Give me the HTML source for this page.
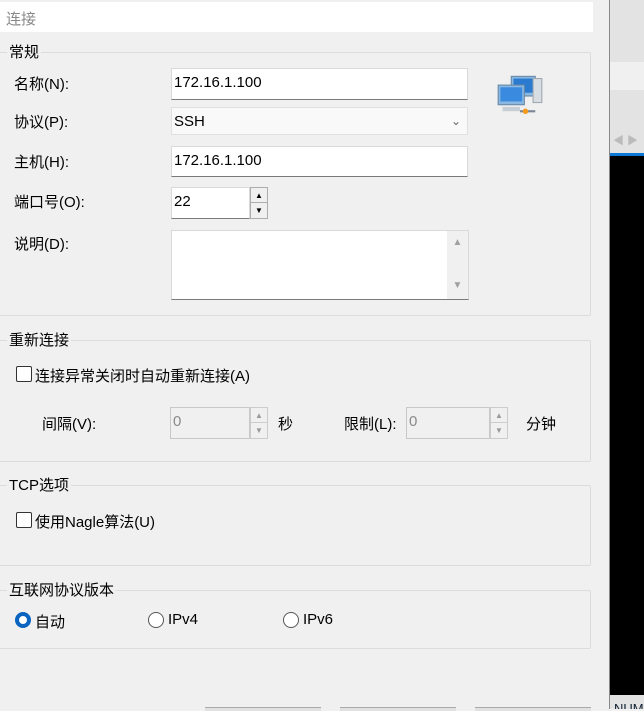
<!DOCTYPE html>
<html><head><meta charset="utf-8"><style>
*{box-sizing:border-box;margin:0;padding:0}
body{width:644px;height:709px;overflow:hidden;background:#f0f0f0;position:relative;font-family:"Liberation Sans","Noto Sans CJK SC",sans-serif;font-size:15px;color:#000}
.a{position:absolute}
.grp{position:absolute;left:-5px;width:596px;border:1px solid #dcdcdc;border-radius:2px}
.gl{position:absolute;background:#f0f0f0;padding:0 2px;left:7px;font-size:15px;line-height:16px}
.in{position:absolute;background:#fff;border:1px solid #d9d9d9;border-bottom:1px solid #7a7a7a;padding-left:2px;font-size:15px}
.dis{background:#f0f0f0;border:1px solid #c8c8c8;color:#8a8a8a}
.spin{position:absolute;width:18px;border:1px solid #adadad;background:#f0f0f0}
.cb{position:absolute;width:16px;height:16px;border:1px solid #333;border-radius:2px;background:#fff}
.rb{position:absolute;width:16px;height:16px;border:1px solid #555;border-radius:50%;background:#fff}
</style></head><body>
<div class="a" style="left:0;top:2px;width:593px;height:30px;background:#fff"></div>
<div class="a" style="left:6px;top:8px;color:#888;font-size:15px">连接</div>

<div class="grp" style="top:52px;height:264px"></div>
<div class="gl" style="top:45px">常规</div>
<div class="a" style="left:14px;top:73px">名称(N):</div>
<div class="in" style="left:171px;top:68px;width:297px;height:32px;line-height:28px">172.16.1.100</div>
<div class="a" style="left:14px;top:111px">协议(P):</div>
<div class="in" style="left:171px;top:107px;width:297px;height:28px;background:#f9f9f9;border-color:#e0e0e0;line-height:28px">SSH<span class="a" style="right:6px;top:-1px;color:#666;font-size:12px">&#8964;</span></div>
<div class="a" style="left:14px;top:151px">主机(H):</div>
<div class="in" style="left:171px;top:146px;width:297px;height:31px;line-height:27px">172.16.1.100</div>
<div class="a" style="left:14px;top:191px">端口号(O):</div>
<div class="in" style="left:171px;top:187px;width:79px;height:32px;line-height:28px">22</div>
<div class="spin" style="left:250px;top:187px;height:32px"><div style="height:15px;border-bottom:1px solid #adadad;text-align:center;font-size:8px;line-height:15px">▲</div><div style="text-align:center;font-size:8px;line-height:15px">▼</div></div>
<div class="a" style="left:14px;top:233px">说明(D):</div>
<div class="in" style="left:171px;top:230px;width:298px;height:70px"></div>
<div class="a" style="left:447px;top:231px;width:21px;height:68px;background:#f0f0f0;color:#a0a0a0;font-size:10px;text-align:center"><div style="margin-top:6px">▲</div><div style="margin-top:32px">▼</div></div>
<svg class="a" style="left:496px;top:72px" width="48" height="48" viewBox="0 0 44 44">
<rect x="14" y="4" width="22" height="18" fill="#8ab8e0" stroke="#6a8aa8"/><rect x="16" y="6" width="18" height="13" fill="#2a7ad0"/>
<rect x="34" y="6" width="8" height="22" fill="#d8dde3" stroke="#a0a8b0"/>
<rect x="2" y="12" width="24" height="18" fill="#8ab8e0" stroke="#6a8aa8"/><rect x="4" y="14" width="20" height="13" fill="#3a8ae0"/>
<path d="M6 32h16v4h-16z" fill="#c8ced6"/><path d="M22 36h14" stroke="#7a8896" stroke-width="2"/><circle cx="27" cy="36" r="2.5" fill="#f39a1e"/>
</svg>

<div class="grp" style="top:340px;height:122px"></div>
<div class="gl" style="top:333px">重新连接</div>
<div class="cb" style="left:16px;top:366px"></div>
<div class="a" style="left:35px;top:365px">连接异常关闭时自动重新连接(A)</div>
<div class="a" style="left:42px;top:413px">间隔(V):</div>
<div class="in dis" style="left:170px;top:407px;width:80px;height:32px;line-height:28px">0</div>
<div class="spin" style="left:250px;top:407px;height:32px;border-color:#ccc;color:#999"><div style="height:15px;border-bottom:1px solid #ccc;text-align:center;font-size:8px;line-height:15px">▲</div><div style="text-align:center;font-size:8px;line-height:15px">▼</div></div>
<div class="a" style="left:278px;top:413px">秒</div>
<div class="a" style="left:344px;top:413px">限制(L):</div>
<div class="in dis" style="left:406px;top:407px;width:84px;height:32px;line-height:28px">0</div>
<div class="spin" style="left:490px;top:407px;height:32px;border-color:#ccc;color:#999"><div style="height:15px;border-bottom:1px solid #ccc;text-align:center;font-size:8px;line-height:15px">▲</div><div style="text-align:center;font-size:8px;line-height:15px">▼</div></div>
<div class="a" style="left:526px;top:413px">分钟</div>

<div class="grp" style="top:485px;height:81px"></div>
<div class="gl" style="top:478px">TCP选项</div>
<div class="cb" style="left:16px;top:512px"></div>
<div class="a" style="left:35px;top:511px">使用Nagle算法(U)</div>

<div class="grp" style="top:590px;height:59px"></div>
<div class="gl" style="top:583px">互联网协议版本</div>
<div class="rb" style="left:15px;top:612px;border:4px solid #0a64c0"></div>
<div class="a" style="left:35px;top:611px">自动</div>
<div class="rb" style="left:148px;top:612px"></div>
<div class="a" style="left:168px;top:611px">IPv4</div>
<div class="rb" style="left:283px;top:612px"></div>
<div class="a" style="left:303px;top:611px">IPv6</div>

<div class="a" style="left:205px;top:707px;width:116px;height:4px;border-top:1px solid #aaa;background:#e1e1e1"></div>
<div class="a" style="left:340px;top:707px;width:116px;height:4px;border-top:1px solid #aaa;background:#e1e1e1"></div>
<div class="a" style="left:475px;top:707px;width:116px;height:4px;border-top:1px solid #aaa;background:#e1e1e1"></div>

<div class="a" style="left:609px;top:0;width:1px;height:709px;background:#888"></div>
<div class="a" style="left:610px;top:0;width:34px;height:62px;background:#e3e3e3"></div>
<div class="a" style="left:610px;top:62px;width:34px;height:28px;background:#f0f0f0"></div>
<div class="a" style="left:610px;top:90px;width:34px;height:63px;background:#e3e3e3"></div>
<div class="a" style="left:613px;top:132px;color:#bbb;font-size:11px">◀ ▶</div>
<div class="a" style="left:610px;top:153px;width:34px;height:3px;background:#0a78d4"></div>
<div class="a" style="left:610px;top:156px;width:34px;height:539px;background:#000"></div>
<div class="a" style="left:610px;top:695px;width:34px;height:14px;background:#e3e3e3;overflow:hidden"><span style="position:absolute;left:4px;top:6px;color:#123;font-size:13px">NUM</span></div>
</body></html>
